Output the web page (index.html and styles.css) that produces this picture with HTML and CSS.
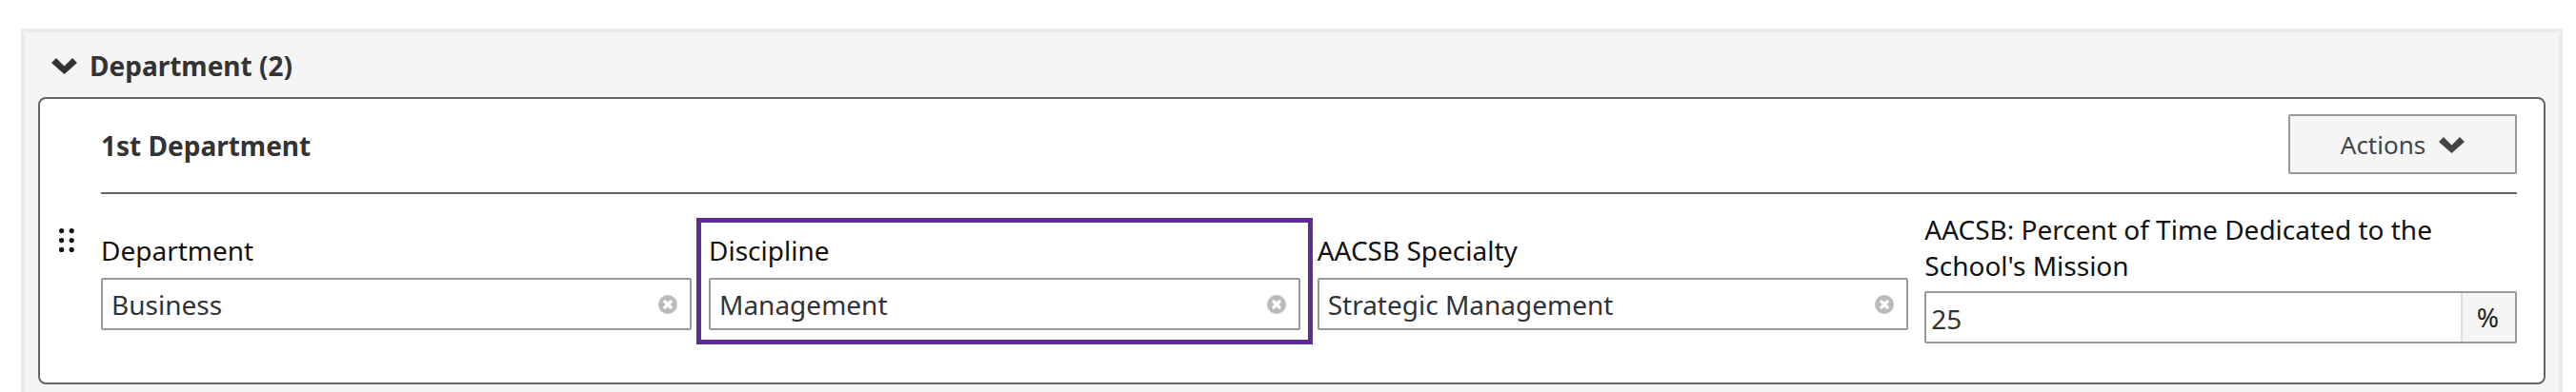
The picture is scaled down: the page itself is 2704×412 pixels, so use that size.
FILE: index.html
```html
<!DOCTYPE html>
<html lang="en">
<head>
<meta charset="utf-8">
<title>Department</title>
<link rel="stylesheet" href="styles.css">
</head>
<body>
<section class="panel">
  <h2 class="panel-title">
    <svg class="chevron" viewBox="0 0 27 18" aria-hidden="true"><path d="M0 6 5 1l8.500 8.500L22 1l5 5-13.500 12z"/></svg>
    Department (2)
  </h2>
  <div class="card">
    <div class="handle">
      <svg viewBox="0 0 16 25" width="16" height="25" aria-hidden="true">
        <circle cx="2.600" cy="2.600" r="2.600"/><circle cx="13.200" cy="2.600" r="2.600"/>
        <circle cx="2.600" cy="12.600" r="2.600"/><circle cx="13.200" cy="12.600" r="2.600"/>
        <circle cx="2.600" cy="22.400" r="2.600"/><circle cx="13.200" cy="22.400" r="2.600"/>
      </svg>
    </div>
    <div class="card-body">
      <header class="card-head">
        <h3 class="card-title">1st Department</h3>
        <button class="actions" type="button">Actions
          <svg class="chevron" viewBox="0 0 27 18" aria-hidden="true"><path d="M0 6 5 1l8.500 8.500L22 1l5 5-13.500 12z"/></svg>
        </button>
      </header>
      <div class="fields">
        <div class="field">
          <label class="label">Department</label>
          <div class="select"><span>Business</span>
            <svg class="clear" viewBox="0 0 20 20" aria-hidden="true"><circle cx="10" cy="10" r="10"/><path d="M7 7l6 6M13 7l-6 6"/></svg></div>
        </div>
        <div class="field field-focus">
          <label class="label">Discipline</label>
          <div class="select"><span>Management</span>
            <svg class="clear" viewBox="0 0 20 20" aria-hidden="true"><circle cx="10" cy="10" r="10"/><path d="M7 7l6 6M13 7l-6 6"/></svg></div>
        </div>
        <div class="field">
          <label class="label">AACSB Specialty</label>
          <div class="select"><span>Strategic Management</span>
            <svg class="clear" viewBox="0 0 20 20" aria-hidden="true"><circle cx="10" cy="10" r="10"/><path d="M7 7l6 6M13 7l-6 6"/></svg></div>
        </div>
        <div class="field field-tall">
          <label class="label">AACSB: Percent of Time Dedicated to the School's Mission</label>
          <div class="number"><span class="number-value">25</span><span class="addon">%</span></div>
        </div>
      </div>
    </div>
  </div>
</section>
</body>
</html>
```

FILE: styles.css
```css
* { box-sizing: border-box; }
html, body { margin: 0; background: #fff; }
body {
  padding: 30px 14px 0 22px;
  height: 412px;
  overflow: hidden;
  font-family: "Noto Sans", "Open Sans", sans-serif;
  font-size: 28px;
  line-height: 38px;
  color: #333;
}
.panel {
  background: #f5f5f5;
  border: 4px solid #ebebeb;
  border-bottom: 0;
  height: 382px;
  padding: 0 14px;
}
.panel-title {
  display: flex;
  align-items: center;
  gap: 13px;
  margin: 0;
  height: 68px;
  padding: 2px 0 0 14px;
  font-size: 28px;
  line-height: 38px;
  font-weight: 700;
  color: #333;
}
.chevron { width: 27px; height: 18px; flex: none; fill: currentColor; }
.card {
  display: flex;
  height: 302px;
  background: #fff;
  border: 2px solid #666;
  border-radius: 8px;
}
.handle { width: 64px; flex: none; padding: 136px 0 0 20px; }
.handle svg { display: block; fill: #111; }
.card-body { flex: 1; min-width: 0; margin-right: 28px; }
.card-head {
  display: flex;
  align-items: center;
  justify-content: space-between;
  height: 100px;
  padding-top: 16px;
  padding-bottom: 17px;
  border-bottom: 2px solid #666;
}
.card-title { margin: 0; font-size: 28px; line-height: 38px; font-weight: 700; color: #333; }
.actions {
  display: flex;
  align-items: center;
  justify-content: center;
  align-self: flex-start;
  gap: 14px;
  width: 240px;
  height: 63px;
  padding: 0;
  background: #f5f5f5;
  border: 2px solid #999;
  border-radius: 2px;
  font: inherit;
  font-size: 26px;
  color: #444;
}
.fields {
  display: grid;
  grid-template-columns: 620px repeat(3, 1fr);
  gap: 18px;
  align-items: start;
  padding-top: 18px;
}
.field { padding-top: 22px; }
.field-tall { padding-top: 0; margin-left: -1px; }
.field-focus {
  outline: 5px solid #5c2d96;
  outline-offset: 8px;
  height: 107px;
  margin-top: 20px;
  padding-top: 2px;
}
.label { display: block; color: #111; }
.select {
  display: flex;
  align-items: center;
  justify-content: space-between;
  height: 55px;
  margin-top: 10px;
  padding: 0 13px 0 9px;
  background: #fff;
  border: 2px solid #999;
  border-radius: 2px;
}
.clear { width: 20px; height: 20px; flex: none; }
.clear circle { fill: #bbb; }
.clear path { stroke: #fff; stroke-width: 3.500; stroke-linecap: round; fill: none; }
.number {
  display: flex;
  height: 55px;
  margin-top: 8px;
  border: 2px solid #999;
  border-radius: 2px;
  background: #fff;
}
.number-value { flex: 1; padding-left: 5px; line-height: 54px; }
.addon {
  width: 57px;
  padding-right: 2px;
  text-align: center;
  background: #f5f5f5;
  border-left: 2px solid #ddd;
  line-height: 51px;
  color: #222;
}
```
